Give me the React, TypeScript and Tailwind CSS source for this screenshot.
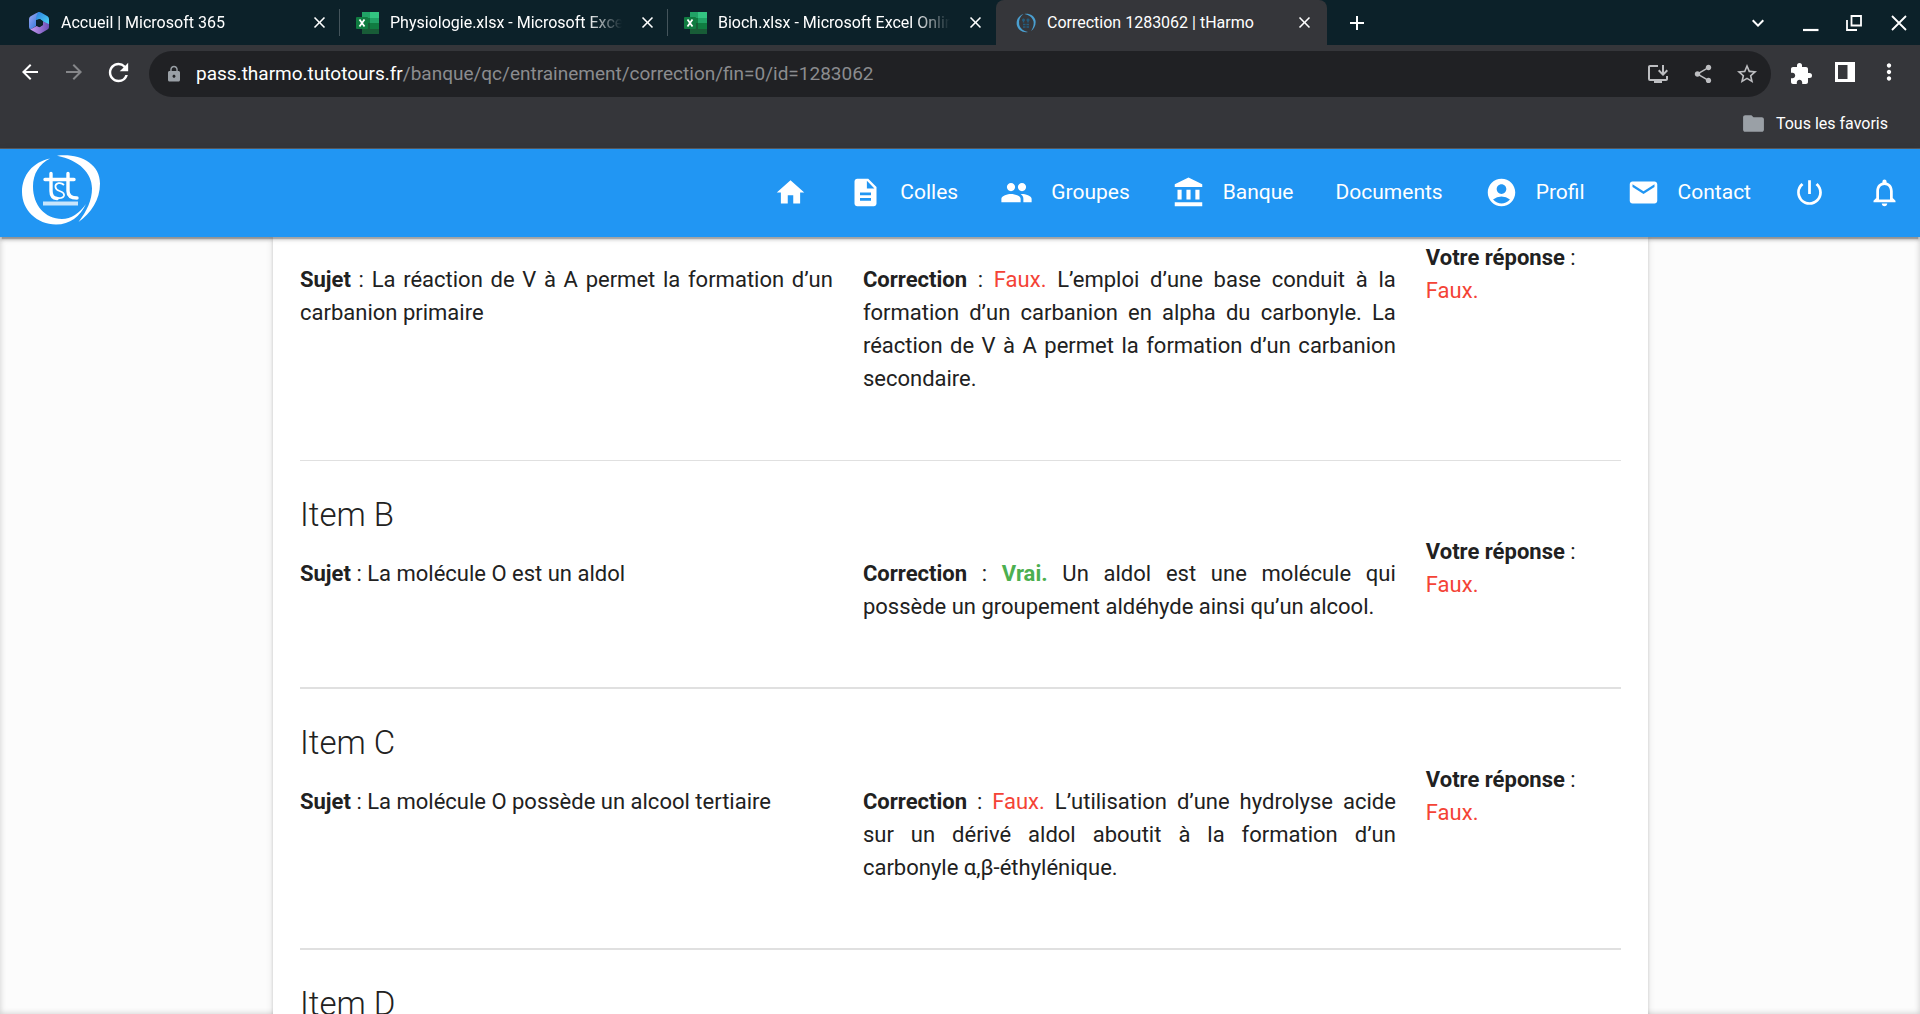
import React from "react";
import {
  MdHome,
  MdDescription,
  MdPeople,
  MdAccountBalance,
  MdAccountCircle,
  MdEmail,
  MdPowerSettingsNew,
  MdNotificationsNone,
  MdArrowBack,
  MdArrowForward,
  MdRefresh,
  MdLock,
  MdInstallDesktop,
  MdShare,
  MdStarBorder,
  MdExtension,
  MdMoreVert,
  MdFolder,
  MdClose,
  MdAdd,
  MdExpandMore,
} from "react-icons/md";

function M365Icon() {
  return (
    <svg viewBox="0 0 22 22" className="h-[22px] w-[22px] shrink-0" aria-hidden="true">
      <defs>
        <linearGradient id="m1" x1="0" y1="0" x2="1" y2="1">
          <stop offset="0" stopColor="#a7a9f5" />
          <stop offset="1" stopColor="#1b6fd6" />
        </linearGradient>
        <linearGradient id="m2" x1="0" y1="0" x2="1" y2="1">
          <stop offset="0" stopColor="#2b7de0" />
          <stop offset="1" stopColor="#4fd8f5" />
        </linearGradient>
        <linearGradient id="m3" x1="0" y1="0" x2="1" y2="0">
          <stop offset="0" stopColor="#c99bf2" />
          <stop offset="1" stopColor="#6a4fb5" />
        </linearGradient>
      </defs>
      <path d="M11 0 8 1.2 2.6 4.3Q1 5.3 1 7v8q0 1.700 1.500 2.600L8 14V8.500Q8 6 12 2z" fill="url(#m1)" />
      <path d="M10 0.300q1.500-.6 3 .2l6.500 3.800Q21 5.200 21 7v6l-6-3.500-3-2.500-4 1q0-4.500 2-7.700z" fill="url(#m2)" />
      <path d="M2.300 17.500 8.600 14l3 1.200L15 13V9.500l6 2.500v3q0 1.600-1.500 2.600l-6.800 3.900q-1.700.8-3.400 0z" fill="url(#m3)" />
      <path d="m11.300 7 3.500 2v3.800L11.300 15 8 13V9z" fill="#0c2129" />
    </svg>
  );
}

function ExcelIcon() {
  return (
    <svg viewBox="0 0 23 22" className="h-[22px] w-[23px] shrink-0" aria-hidden="true">
      <path d="M6 0h8v6H6z" fill="#21a366" />
      <path d="M14 0h9v6h-9z" fill="#33c481" />
      <path d="M6 6h8v5H6z" fill="#107c41" />
      <path d="M14 6h9v5h-9z" fill="#21a366" />
      <path d="M6 11h8v11H6z" fill="#185c37" />
      <path d="M14 11h9v6h-9z" fill="#107c41" />
      <path d="M14 17h9v5h-9z" fill="#185c37" />
      <rect x="0" y="5" width="12" height="12" rx="1" fill="#107c41" />
      <path d="m3.500 7.500 5 7m0-7-5 7" stroke="#fff" strokeWidth="1.800" />
    </svg>
  );
}

function TharmoIcon() {
  return (
    <svg viewBox="0 0 20 20" className="h-5 w-5 shrink-0" aria-hidden="true">
      <path d="M7.500 1C2 3 0 7.500.8 12c1.200 5 6 8 11.200 7C7.500 18 4 15.500 3.200 11.500 2.500 7 4 3.500 7.500 1z" fill="#4a9fd0" />
      <path d="M8.500 1c5-.8 10 2 11 6.500.7 4.500-1.300 8.500-4.500 10.500 2-3 3.200-6.500 2.500-9.700C16.500 4.500 13 2 8.500 1z" fill="#4a9fd0" />
      <path d="M6 7h3M7.500 5.500v4M10.500 7h3M12 5.500v4M7 11.500h2.500M10.500 11.500H13M7 14h2.500M10.500 14H13" stroke="#245e80" strokeWidth="1.500" />
    </svg>
  );
}

function Logo() {
  return (
    <svg viewBox="0 0 80 70" className="h-[70px] w-20" role="img" aria-label="tst">
      <path
        d="M29 3.500C12 7 1 20 1 37c0 18 15 32.500 34 32.500 14 0 24-8 30-20.500C58.500 58 50 64 41 64 24 64 12 50 12 31.500 12 19 18 9 29 3.500z"
        fill="#fff"
      />
      <path d="M36 .7C58-2 79 8 79 28.500 79 45 70 58 57.500 67 66 56 71 45 71 33.500 71 18 58 5 36 .7z" fill="#fff" />
      <path d="M24 24.500h29M30 18.500V36q0 7 6 7.500M47 18.500V36q0 7 9 7" fill="none" stroke="#fff" strokeWidth="3.400" strokeLinecap="round" />
      <path d="M43 30q-2.500-2.500-5.500-1.800-3.500 1-3 4Q35 35 38.500 36q5 1.500 4.500 4.500-1 3.300-7 2.500" fill="none" stroke="#fff" strokeWidth="1.800" />
      <path d="M22 46.500h35v4H22z" fill="#fff" fillOpacity=".75" />
    </svg>
  );
}

function Tab({ icon, title, active }: { icon: React.ReactNode; title: string; active?: boolean }) {
  return (
    <div
      className={
        active
          ? "flex w-[331px] items-center rounded-t-lg bg-[#35363a] pl-5 pr-[13px] text-white"
          : "flex w-[328px] items-center pl-4 pr-[11px] text-white"
      }
    >
      {icon}
      <span
        className={
          active
            ? "ml-[11px] min-w-0 flex-1 overflow-hidden whitespace-nowrap text-base"
            : "ml-[11px] mr-4 min-w-0 flex-1 overflow-hidden whitespace-nowrap text-base [mask-image:linear-gradient(to_right,black_85%,transparent)]"
        }
      >
        {title}
      </span>
      <button aria-label="Fermer l’onglet">
        <MdClose className="h-[19px] w-[19px] stroke-current" />
      </button>
    </div>
  );
}

function TabStrip() {
  return (
    <div className="flex h-[45px] bg-[#0c2129] pl-3">
      <Tab icon={<M365Icon />} title="Accueil | Microsoft 365" />
      <span className="my-[9px] -ml-px w-px bg-[#44545b]" />
      <Tab icon={<ExcelIcon />} title="Physiologie.xlsx - Microsoft Excel Online" />
      <span className="my-[9px] -ml-px w-px bg-[#44545b]" />
      <Tab icon={<ExcelIcon />} title="Bioch.xlsx - Microsoft Excel Online" />
      <Tab icon={<TharmoIcon />} title="Correction 1283062 | tHarmo" active />
      <button aria-label="Nouvel onglet" className="ml-[18px] text-white">
        <MdAdd className="h-6 w-6 stroke-current" />
      </button>
      <div className="ml-auto flex items-center pr-3 text-white">
        <button aria-label="Rechercher dans les onglets" className="mr-8">
          <MdExpandMore className="h-6 w-6" />
        </button>
        <button aria-label="Réduire" className="mr-[26px] mt-1">
          <svg viewBox="0 0 18 18" className="h-[18px] w-[18px]">
            <path d="M1 14h15.500" stroke="#fff" strokeWidth="2.200" />
          </svg>
        </button>
        <button aria-label="Restaurer" className="mr-7">
          <svg viewBox="0 0 16 16" className="h-4 w-4" fill="none" stroke="#fff" strokeWidth="1.800">
            <path d="M5.500 1h9.500v9.500H5.500zM1 5v10h10" />
          </svg>
        </button>
        <button aria-label="Fermer">
          <svg viewBox="0 0 18 18" className="h-[18px] w-[18px]" stroke="#fff" strokeWidth="1.800">
            <path d="m2 2 14 14M16 2 2 16" />
          </svg>
        </button>
      </div>
    </div>
  );
}

function Toolbar() {
  return (
    <div className="flex h-[58px] items-center bg-[#35363a] pl-[18px] pr-[18px] text-white">
      <button aria-label="Précédent" className="mb-1 mr-5">
        <MdArrowBack className="h-6 w-6" />
      </button>
      <button aria-label="Suivant" className="mb-1 mr-[18px] text-[#86878a]">
        <MdArrowForward className="h-6 w-6" />
      </button>
      <button aria-label="Actualiser" className="mb-1 mr-4">
        <MdRefresh className="h-[29px] w-[29px]" />
      </button>
      <div className="flex h-[46px] min-w-0 flex-1 items-center rounded-full bg-[#202124] pl-4 pr-3 text-[#bdbec1]">
        <MdLock className="h-[18px] w-[18px] shrink-0 text-[#9aa0a6]" />
        <div className="ml-[13px] min-w-0 flex-1 truncate text-[19px] text-[#8b8c8f]">
          <span className="text-white">pass.tharmo.tutotours.fr</span>/banque/qc/entrainement/correction/fin=0/id=1283062
        </div>
        <button aria-label="Installer l’application" className="mr-[22px]">
          <MdInstallDesktop className="h-6 w-6" />
        </button>
        <button aria-label="Partager" className="mr-[21px]">
          <MdShare className="h-[22px] w-[22px]" />
        </button>
        <button aria-label="Ajouter aux favoris">
          <MdStarBorder className="h-6 w-6" />
        </button>
      </div>
      <button aria-label="Extensions" className="ml-[18px] mr-[22px]">
        <MdExtension className="h-6 w-6" />
      </button>
      <button aria-label="Panneau latéral" className="mb-1 mr-[21px]">
        <svg viewBox="0 0 20 20" className="h-5 w-5">
          <path d="M0 0h20v20H0zM3 3v14h9.500V3z" fill="#fff" fillRule="evenodd" />
        </svg>
      </button>
      <button aria-label="Menu" className="mb-1">
        <MdMoreVert className="h-[26px] w-[26px]" />
      </button>
    </div>
  );
}

function BookmarksBar() {
  return (
    <div className="flex h-[46px] items-center justify-end border-b border-[#5a5b5e] bg-[#35363a] pb-1 pr-8">
      <button className="flex items-center gap-[10px] text-base text-white">
        <MdFolder className="h-[25px] w-[25px] text-[#9aa0a6]" />
        Tous les favoris
      </button>
    </div>
  );
}

function NavLink({ icon, label, name }: { icon?: React.ReactNode; label?: string; name?: string }) {
  return (
    <a href="#" aria-label={name} className="flex items-center gap-[18px] px-[21px]">
      {icon}
      {label}
    </a>
  );
}

function SiteNav() {
  const size = "h-[33px] w-[33px]";
  return (
    <header className="relative z-10 flex h-[88px] shrink-0 justify-between bg-[#2196f3] text-[21px] text-white shadow-[0_3px_3px_0_rgba(0,0,0,0.14),0_1px_7px_0_rgba(0,0,0,0.12),0_4px_1px_-2px_rgba(0,0,0,0.2)]">
      <a href="#" className="ml-[21px] mt-1.5">
        <Logo />
      </a>
      <nav className="-mr-0.5 flex pb-px">
        <NavLink icon={<MdHome className={size} />} name="Accueil" />
        <NavLink icon={<MdDescription className={size} />} label="Colles" />
        <NavLink icon={<MdPeople className={size} />} label="Groupes" />
        <NavLink icon={<MdAccountBalance className={size} />} label="Banque" />
        <NavLink label="Documents" />
        <NavLink icon={<MdAccountCircle className={size} />} label="Profil" />
        <NavLink icon={<MdEmail className={size} />} label="Contact" />
        <NavLink icon={<MdPowerSettingsNew className={size} />} name="Déconnexion" />
        <NavLink icon={<MdNotificationsNone className={size} />} name="Notifications" />
      </nav>
    </header>
  );
}

type Item = { title?: string; subject: string; answer: boolean; correction: string };

const items: Item[] = [
  {
    subject: "La réaction de V à A permet la formation d’un carbanion primaire",
    answer: false,
    correction:
      "L’emploi d’une base conduit à la formation d’un carbanion en alpha du carbonyle. La réaction de V à A permet la formation d’un carbanion secondaire.",
  },
  {
    title: "Item B",
    subject: "La molécule O est un aldol",
    answer: true,
    correction: "Un aldol est une molécule qui possède un groupement aldéhyde ainsi qu’un alcool.",
  },
  {
    title: "Item C",
    subject: "La molécule O possède un alcool tertiaire",
    answer: false,
    correction:
      "L’utilisation d’une hydrolyse acide sur un dérivé aldol aboutit à la formation d’un carbonyle α,β-éthylénique.",
  },
];

function ItemTitle({ children }: { children: React.ReactNode }) {
  return <h5 className="mt-[33px] text-[33px] font-light leading-[41px]">{children}</h5>;
}

function ItemBlock({ item }: { item: Item }) {
  return (
    <section className="pb-[42px] first:pb-[43px]">
      {item.title && <ItemTitle>{item.title}</ItemTitle>}
      <div className="-mx-[15px] grid grid-cols-12">
        <p className="col-span-5 my-[22px] px-[15px] text-justify">
          <b>Sujet</b> : {item.subject}
        </p>
        <p className="col-span-5 my-[22px] px-[15px] text-justify">
          <b>Correction</b> :{" "}
          {item.answer ? <b className="text-[#4caf50]">Vrai.</b> : <span className="text-[#f44336]">Faux.</span>}{" "}
          {item.correction}
        </p>
        <div className="col-span-2 px-[15px]">
          <b>Votre réponse</b> :<br />
          <span className="text-[#f44336]">Faux.</span>
        </div>
      </div>
    </section>
  );
}

export default function App() {
  return (
    <div className="flex h-screen flex-col overflow-hidden bg-[#fcfcfc] font-[Roboto,sans-serif]">
      <div className="shrink-0">
        <TabStrip />
        <Toolbar />
        <BookmarksBar />
      </div>
      <SiteNav />
      <main className="min-h-0 flex-1 overflow-hidden pl-[273px] pr-[272px] text-[22px] leading-[33px] text-[#212121] shadow-[inset_0_0_6px_rgba(0,0,0,0.2)]">
        <div className="bg-white px-[27px] pb-6 pt-1 shadow-[0_3px_3px_0_rgba(0,0,0,0.14),0_1px_7px_0_rgba(0,0,0,0.12),0_4px_1px_-2px_rgba(0,0,0,0.2)]">
          {items.map((item, i) => (
            <React.Fragment key={item.subject}>
              <ItemBlock item={item} />
              <hr className={i === 0 ? "border-t border-[#e0e0e0]" : "border-t-2 border-[#e0e0e0]"} />
            </React.Fragment>
          ))}
          <ItemTitle>Item D</ItemTitle>
        </div>
      </main>
    </div>
  );
}
